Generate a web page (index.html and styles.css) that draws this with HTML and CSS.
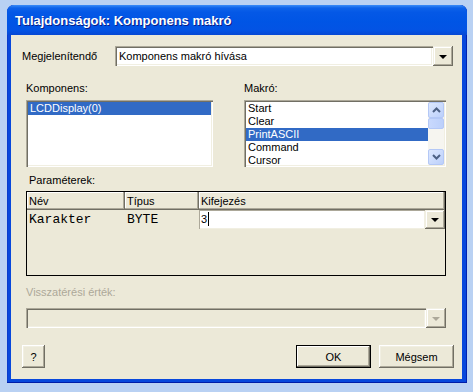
FILE: index.html
```html
<!doctype html>
<html>
  <head>
    <link rel="stylesheet" href="styles.css">
  </head>
  <body>
    <div class="window">
      <div class="titlebar"><span class="title">Tulajdonságok: Komponens makró</span></div>
      <div class="client">
        <div class="row-display">
          <div class="lbl lbl-display">Megjelenítendő</div>
          <div class="combo combo-display">
            <div class="field">Komponens makró hívása</div>
            <div class="drop"><span class="tri"></span></div>
          </div>
        </div>

        <div class="lists">
          <div class="group group-comp">
            <div class="lbl">Komponens:</div>
            <div class="listbox">
              <div class="items">
                <div class="item sel">LCDDisplay(0)</div>
              </div>
            </div>
          </div>
          <div class="group group-macro">
            <div class="lbl">Makró:</div>
            <div class="listbox">
              <div class="items">
                <div class="item">Start</div>
                <div class="item">Clear</div>
                <div class="item sel">PrintASCII</div>
                <div class="item">Command</div>
                <div class="item">Cursor</div>
              </div>
              <div class="vscroll">
                <div class="sbtn">
                  <svg width="9" height="6" viewBox="0 0 9 6"><path d="M1 5 L4.5 1.5 L8 5" fill="none" stroke="#4d6185" stroke-width="2"/></svg>
                </div>
                <div class="thumb"></div>
                <div class="track"></div>
                <div class="sbtn">
                  <svg width="9" height="6" viewBox="0 0 9 6"><path d="M1 1 L4.5 4.5 L8 1" fill="none" stroke="#4d6185" stroke-width="2"/></svg>
                </div>
              </div>
            </div>
          </div>
        </div>

        <div class="lbl lbl-params">Paraméterek:</div>
        <div class="grid">
          <div class="grid-head">
            <div class="hcell c1">Név</div>
            <div class="hcell c2">Típus</div>
            <div class="hcell c3">Kifejezés</div>
          </div>
          <div class="grid-row">
            <div class="cell c1 mono">Karakter</div>
            <div class="cell c2 mono">BYTE</div>
            <div class="cell c3 edit">
              <div class="field">3<span class="caret"></span></div>
              <div class="drop"><span class="tri"></span></div>
            </div>
          </div>
        </div>

        <div class="lbl lbl-ret disabled">Visszatérési érték:</div>
        <div class="combo combo-ret disabled">
          <div class="field"></div>
          <div class="drop"><span class="tri"></span></div>
        </div>

        <div class="buttons">
          <button class="btn btn-help">?</button>
          <div class="spacer"></div>
          <button class="btn btn-default">OK</button>
          <button class="btn">Mégsem</button>
        </div>
      </div>
    </div>
  </body>
</html>
```

FILE: styles.css
```css
html, body {
  margin: 0;
  padding: 0;
}

body {
  background: #b9d1f3;
  padding: 5px 0 0 7px;
  width: 466px;
  height: 387px;
  font-family: "Liberation Sans", Arial, sans-serif;
  font-size: 11px;
  color: #000;
}

.window {
  width: 460px;
  height: 378px;
  box-sizing: border-box;
  background: #0848dc;
  border-radius: 7px 7px 0 0;
  padding: 0 5px 4px 4px;
  display: flex;
  flex-direction: column;
  box-shadow: inset 0 -1px #001ea8, inset -1px 0 #0022b0, inset 1px 0 #0a3ccc;
}

.titlebar {
  height: 30px;
  margin: 0 -5px 0 -4px;
  border-radius: 7px 7px 0 0;
  background: linear-gradient(#3a8cf8 0%, #0d62ea 10%, #0458e6 25%, #0055e5 55%, #0353e4 85%, #0748d4 100%);
  display: flex;
  align-items: center;
  padding: 1px 0 0 8px;
  box-sizing: border-box;
}

.title {
  color: #fff;
  font-weight: bold;
  font-size: 13px;
  text-shadow: 1px 1px #0a1e8a;
}

.client {
  flex: 1;
  background: #ece9d8;
  display: flex;
  flex-direction: column;
}

.lbl {
  line-height: 13px;
  height: 13px;
}

.disabled {
  color: #aca899;
}

/* top combo */
.row-display {
  display: flex;
  align-items: center;
  margin-top: 11px;
  padding-left: 11px;
  height: 20px;
}

.lbl-display {
  width: 93px;
}

.combo {
  display: flex;
  height: 20px;
}

.combo-display {
  width: 338px;
}

.field {
  flex: 1;
  background: #fff;
  box-shadow: inset 1px 1px #aca899, inset 2px 2px #716f64, inset -1px -1px #fff, inset -2px -2px #f1efe2;
  padding: 0 4px;
  line-height: 20px;
  white-space: nowrap;
  overflow: hidden;
}

.drop {
  width: 20px;
  background: #ece9d8;
  box-shadow: inset -1px -1px #716f64, inset 1px 1px #f1efe2, inset -2px -2px #aca899, inset 2px 2px #fff;
  display: flex;
  align-items: center;
  justify-content: center;
}

.tri {
  width: 0;
  height: 0;
  border-left: 4px solid transparent;
  border-right: 4px solid transparent;
  border-top: 4px solid #000;
  margin-top: 1px;
}

/* lists */
.lists {
  display: flex;
  margin-top: 16px;
  padding-left: 15px;
  gap: 31px;
}

.group .lbl {
  margin-bottom: 5px;
}

.listbox {
  height: 67px;
  box-sizing: border-box;
  background: #fff;
  padding: 2px;
  box-shadow: inset 1px 1px #aca899, inset 2px 2px #716f64, inset -1px -1px #fff, inset -2px -2px #f1efe2;
  display: flex;
  overflow: hidden;
}

.group-comp .listbox {
  width: 187px;
}

.group-macro .listbox {
  width: 202px;
}

.items {
  flex: 1;
  overflow: hidden;
}

.item {
  height: 13px;
  line-height: 13px;
  padding-left: 2px;
  white-space: nowrap;
}

.item.sel {
  background: #316ac5;
  color: #fff;
}

.vscroll {
  width: 16px;
  display: flex;
  flex-direction: column;
  background: #f6f5f0;
}

.sbtn {
  height: 16px;
  box-sizing: border-box;
  border: 1px solid #b4c8f6;
  border-radius: 2px;
  background: linear-gradient(135deg, #dde8fe, #bcd0fb);
  display: flex;
  align-items: center;
  justify-content: center;
}

.thumb {
  height: 11px;
  box-sizing: border-box;
  border: 1px solid #b4c8f6;
  border-radius: 2px;
  background: linear-gradient(90deg, #c9d9fd, #bcd0fb);
}

.track {
  flex: 1;
}

/* parameter grid */
.lbl-params {
  margin-top: 7px;
  padding-left: 18px;
}

.grid {
  margin: 4px 0 0 15px;
  width: 420px;
  height: 85px;
  box-sizing: border-box;
  border: 1px solid #000;
}

.grid-head,
.grid-row {
  display: flex;
}

.grid-head {
  height: 18px;
}

.grid-row {
  height: 19px;
}

.c1 { width: 98px; }
.c2 { width: 74px; }
.c3 { flex: 1; }

.hcell {
  box-sizing: border-box;
  padding-left: 2px;
  line-height: 18px;
  box-shadow: inset -1px -1px #716f64, inset -2px -2px #aca899, inset 1px 1px #fff;
}

.cell {
  box-sizing: border-box;
  line-height: 19px;
  padding-left: 2px;
}

.mono {
  font-family: "Liberation Mono", "Courier New", monospace;
  font-size: 13px;
}

.cell.edit {
  display: flex;
  padding: 0;
}

.cell.edit .field {
  padding: 0 2px;
  line-height: 19px;
  box-shadow: inset 1px 1px #aca899, inset -1px -1px #f1efe2;
}

.caret {
  display: inline-block;
  width: 1px;
  height: 14px;
  background: #000;
  vertical-align: -3px;
  margin-left: 1px;
}

/* return value */
.lbl-ret {
  margin-top: 10px;
  padding-left: 15px;
}

.combo-ret {
  margin: 9px 0 0 15px;
  width: 420px;
}

.combo-ret .field {
  background: #ece9d8;
}

.combo-ret .tri {
  border-top-color: #aca899;
}

/* buttons */
.buttons {
  display: flex;
  margin-top: 17px;
  padding: 0 8px 0 11px;
  gap: 8px;
}

.spacer {
  flex: 1;
}

.btn {
  font-family: "Liberation Sans", Arial, sans-serif;
  font-size: 11px;
  color: #000;
  height: 23px;
  width: 75px;
  border: 0;
  padding: 0;
  margin: 0;
  background: #ece9d8;
  box-shadow: inset -1px -1px #716f64, inset 1px 1px #fff, inset -2px -2px #aca899, inset 2px 2px #f1efe2;
}

.btn-help {
  width: 23px;
}

.btn-default {
  box-shadow: inset 0 0 0 1px #000, inset -2px -2px #716f64, inset 2px 2px #fff, inset -3px -3px #aca899;
}
```
